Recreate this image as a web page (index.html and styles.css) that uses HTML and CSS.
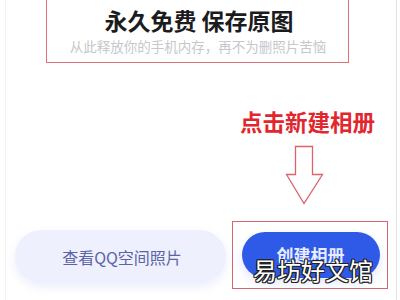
FILE: index.html
```html
<!DOCTYPE html>
<html lang="zh-CN">
<head>
<meta charset="utf-8">
<link rel="stylesheet" href="styles.css">
</head>
<body>
<div class="page">
  <section class="hero">
    <h1 class="hero-title">永久免费 保存原图</h1>
    <p class="hero-sub">从此释放你的手机内存，再不为删照片苦恼</p>
  </section>
  <p class="cta">点击新建相册</p>
  <svg class="arrow" width="40" height="62" viewBox="0 0 40 62">
    <path d="M10.5 1.5 H27.5 V29.5 H37.5 L19 58.5 L1.5 29.5 H10.5 Z" fill="#fff" stroke="#d9646c" stroke-width="1.3" stroke-linejoin="miter"/>
  </svg>
  <div class="actions">
    <button class="btn-light">查看QQ空间照片</button>
    <div class="highlight">
      <button class="btn-primary">创建相册</button>
    </div>
  </div>
  <div class="watermark">易坊好文馆</div>
</div>
</body>
</html>
```
FILE: styles.css
```css
html, body {
  margin: 0;
  padding: 0;
  background: #fff;
}
.page {
  position: relative;
  width: 400px;
  height: 300px;
  overflow: hidden;
  font-family: "Noto Sans CJK SC", "Noto Sans", sans-serif;
  background: linear-gradient(to right, transparent 5px, #f3f3f5 5px, #f3f3f5 6px, transparent 6px, transparent 396px, #e3e3e6 396px, #e3e3e6 397px, transparent 397px);
}
.hero {
  box-sizing: border-box;
  margin: -14px 0 0 46px;
  width: 303px;
  height: 77px;
  border: 1.5px solid #e07078;
  padding-top: 18px;
  text-align: center;
}
.hero-title {
  margin: 0;
  font-size: 23px;
  line-height: 30px;
  font-weight: 700;
  color: #1c1c1e;
  padding-left: 3px;
}
.hero-sub {
  margin: 2px 0 0;
  font-size: 13.5px;
  line-height: 18px;
  color: #c6c7cc;
  padding-left: 1px;
}
.cta {
  margin: 44px 0 0;
  padding-right: 25px;
  text-align: right;
  font-size: 22.5px;
  line-height: 28px;
  font-weight: 700;
  color: #e2262d;
}
.arrow {
  display: block;
  margin: 10px 0 0 285px;
}
.actions {
  display: flex;
  align-items: flex-start;
  margin-top: 14px;
  padding-left: 15px;
}
.btn-light {
  margin-top: 9px;
  width: 211px;
  height: 53px;
  border: none;
  border-radius: 27px;
  background: #eef0fd;
  box-shadow: 0 4px 10px rgba(110, 120, 220, 0.12);
  font-family: inherit;
  font-size: 16px;
  color: #5c64a6;
  padding: 0 0 0 3px;
}
.highlight {
  box-sizing: border-box;
  margin-left: 6px;
  width: 156px;
  height: 68px;
  border: 1.5px solid #d46670;
  padding: 9.5px 7px 0 8.5px;
}
.btn-primary {
  display: block;
  width: 138px;
  height: 46px;
  border: none;
  border-radius: 23px;
  background: #2f5ae8;
  box-shadow: 0 4px 10px rgba(47, 90, 232, 0.15);
  font-family: inherit;
  font-size: 17px;
  font-weight: 700;
  color: #e8ecff;
  padding: 0;
}
.watermark {
  position: absolute;
  left: 253px;
  top: 254px;
  font-size: 24px;
  line-height: 32px;
  color: #fff;
  text-shadow: -1px -1px 0 #222, 1px -1px 0 #222, -1px 1px 0 #222, 1px 1px 0 #222, 0 1px 0 #222, 0 -1px 0 #222, 1px 0 0 #222, -1px 0 0 #222;
}
```
